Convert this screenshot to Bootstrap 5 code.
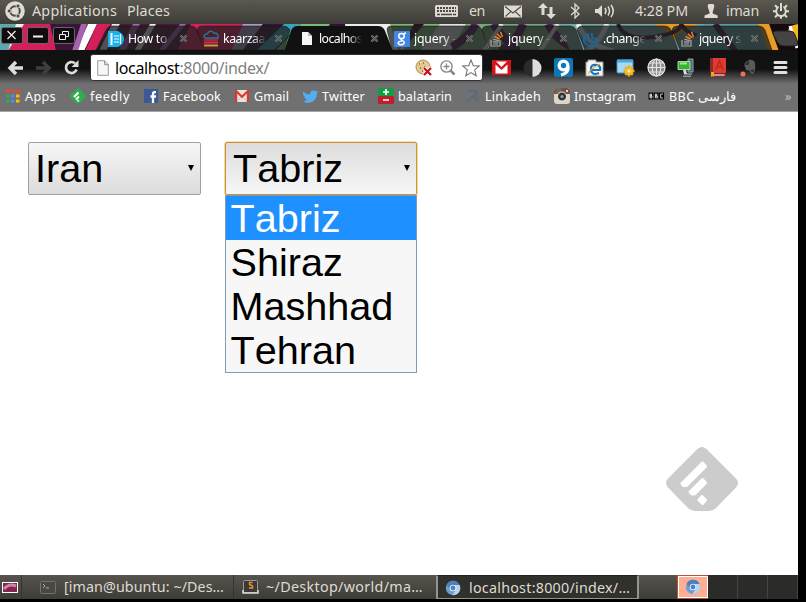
<!DOCTYPE html>
<html lang="en">
<head>
<meta charset="utf-8">
<meta name="viewport" content="width=device-width, initial-scale=1">
<title>localhost:8000/index/</title>
<link href="https://cdn.jsdelivr.net/npm/bootstrap@5.3.0/dist/css/bootstrap.min.css" rel="stylesheet">
<style>
html,body{height:602px;overflow:hidden;background:#000}
body{font-family:"Noto Sans","Open Sans",sans-serif;line-height:1}
svg{display:block;overflow:visible}
.fit{white-space:nowrap;display:inline-block;justify-self:start}
.desktop{width:798px;height:599px}
.sys-panel,.tools,.marks,.tabs-row{display:grid;align-items:center}
.sys-panel{height:24px;padding-left:5px;grid-template-columns:27px 95px 308px 34px 35px 34px 33px 23px 41px 69px 22px 47px 25px;background:linear-gradient(#5b5850,#3d3c38);color:#dfdbd2;font-size:14.3px;padding-bottom:2px}
.strip{height:27px;background:#2b1024;overflow:hidden}
.strip-art{position:absolute;inset:0}
.tabs-row{position:relative;height:27px;padding:2px 0 0 108px;grid-template-columns:95px 98px 93px 96px 93px 98px 115px;color:#fff;font-size:12.3px}
.tab-item{display:grid;grid-template-columns:20px 51px 9px;align-items:center}
.tab-item.tight{grid-template-columns:18px 51px 9px}
.tab-name{width:43px;overflow:hidden;white-space:nowrap;line-height:18px;-webkit-mask-image:linear-gradient(90deg,#000 68%,transparent);mask-image:linear-gradient(90deg,#000 68%,transparent)}
.tools{height:33px;padding-left:8px;grid-template-columns:28px 28px 26px 402px 31px 31px 31px 31px 31px 31px 32px 30px 33px 20px;background:linear-gradient(#111 0,#121212 55%,#707070 100%)}
.omni{width:393px;height:27px;background:#fff;border:1px solid #333;border-radius:3px;display:grid;align-items:center;grid-template-columns:18px 300px 25px 22px 18px;padding-left:6px;font-size:16px;color:#808080}
.omni b{font-weight:400;color:#000}
.marks{height:28px;padding-left:6px;padding-bottom:2px;grid-template-columns:19px 45px 20px 54px 19px 72px 19px 49px 19px 56px 20px 67px 20px 69px 20px 75px 20px 116px 13px;background:#707070;color:#fff;font-size:12.6px;border-bottom:1px solid #a5a5a5}
.marks svg{margin-top:-1px}
.marks span{padding-top:1px}
.marks .more{color:#c4c4c4}
.page-area{height:463px;padding:30px 0 0 28px}
.pick{height:53px;border:1px solid #a0a0a0;border-radius:2px;background:linear-gradient(#f6f6f6,#dcdcdc);font:39.6px/51px "Liberation Sans",Arial,sans-serif;font-kerning:none;color:#000;padding:0 6px}
.pick svg{margin-top:-1px}
.pick-country{width:173px}
.pick-city{width:192px;margin-left:24px;padding-left:7px;border-color:#c7923c;box-shadow:0 0 0 .6px #eebf62;background:linear-gradient(#dcdcdc,#f7f7f7)}
.options{position:absolute;left:0;top:52px;width:192px;border:1px solid #7f9db9;background:#f7f7f7;margin-left:-1px}
.options li{height:44px;line-height:44px;padding-left:4.5px}
.options li:first-child{background:#1e90ff;color:#fff}
.feedly{position:absolute;left:666px;top:335px}
.task-panel{height:24px;background:linear-gradient(#57544d,#3d3c38);color:#dfdbd2;font-size:14.3px}
.task{height:24px;display:grid;align-items:center}
.t0{width:21px;padding-left:2px}
.t1{width:212px;padding-left:18px;grid-template-columns:24px auto;border-left:1px solid #35342f}
.t2{width:203px;padding-left:9px;grid-template-columns:23px auto;border-left:1px solid #35342f}
.t3{width:203px;padding-left:7px;grid-template-columns:24px auto;border:2px solid #92958c;border-top:1px solid #222;border-bottom-width:1px;background:#30302d}
.t3 svg,.t3 span{position:relative;top:1px}
.spaces{margin-left:39px;height:24px}
.spaces div{width:30px;background:#2b2b2a;border-right:1px solid #444}
.spaces .here{background:#ffae91;border:1px solid #fff;outline:1px solid #a85c3d;height:22px;margin-top:1px;padding:2px 6px}
</style>
<script src="https://cdn.jsdelivr.net/npm/bootstrap@5.3.0/dist/js/bootstrap.bundle.min.js"></script>
</head>
<body>
<svg width="0" height="0" class="position-absolute">
<defs>
<symbol id="close" viewBox="0 0 9 9"><path d="M1.5 1.5l6 6M7.5 1.5l-6 6" stroke="#777" stroke-width="2.3"/><path d="M1.5 1.5l6 6M7.5 1.5l-6 6" stroke="#444" stroke-width=".8"/></symbol>
<symbol id="sheet" viewBox="0 0 12 16"><path d="M.7.7h7l3.6 3.8v10.8H.7z" fill="#f7f7f7" stroke="#999"/><path d="M7.5.7v4h4" fill="#ddd" stroke="#999"/></symbol>
<symbol id="overflow" viewBox="0 0 16 16"><path d="M1 9v6h9V9M3 13h5M3 10.800l5.500.3M3.400 8.300l5.400 1.300" fill="none" stroke="#aaa" stroke-width="1.200"/><path d="M4.500 5.500l5 2.500M7 2.800l4 4M10.500.8l2 5.200" stroke="#f48024" stroke-width="1.500"/></symbol>
<symbol id="chromium" viewBox="0 0 16 16"><circle cx="8" cy="8" r="7.2" fill="#6e9fd2"/><path d="M1.6 4.7A7.2 7.2 0 0 1 14.6 5H8L5 9z" fill="#4f7fb8"/><path d="M14.6 5A7.2 7.2 0 0 1 7.5 15.2L11 9.500 10 5z" fill="#b7d3ee"/><circle cx="8" cy="8" r="3.300" fill="#e8f1fb"/><circle cx="8" cy="8" r="2.400" fill="#4b83c5"/></symbol>
</defs>
</svg>
<div class="desktop">
  <header class="sys-panel">
    <svg width="20" height="20" viewBox="0 0 20 20"><circle cx="10" cy="10" r="9.8" fill="#dfdbd2"/><circle cx="10" cy="10" r="4.8" fill="none" stroke="#4b4943" stroke-width="2"/><g fill="#4b4943" stroke="#dfdbd2" stroke-width=".9"><circle cx="4.200" cy="10" r="2"/><circle cx="13" cy="5" r="2"/><circle cx="13" cy="15" r="2"/></g></svg>
    <span class="fit" data-w="85">Applications</span><span class="fit" data-w="43">Places</span>
    <svg width="23" height="13" viewBox="0 0 23 13"><rect width="23" height="12" rx="1.5" fill="#dfdbd2"/><path d="M2 3h19M2 6h19" stroke="#4b4943" stroke-width="2" stroke-dasharray="2 1"/><path d="M2 9.5h3M6 9.5h11M18 9.5h3" stroke="#4b4943" stroke-width="1.6"/></svg>
    <span class="fit" data-w="16">en</span>
    <svg width="18" height="13" viewBox="0 0 18 13"><path d="M0 .5h18v12H0z" fill="#dfdbd2"/><path d="M1 1.5l8 6.5 8-6.5M1.5 11.5L7 6.4M16.5 11.5L11 6.4" fill="none" stroke="#4b4943" stroke-width="1.1"/></svg>
    <svg width="18" height="16" viewBox="0 0 18 16"><path d="M5 0l5 5H6.500v7h-3V5H0zM13 16l-5-5h3.500V4h3v7H18z" fill="#dfdbd2"/></svg>
    <svg width="9" height="16" viewBox="0 0 9 16"><path d="M0 4l8 7-4 4V1l4 4-8 7" fill="none" stroke="#dfdbd2" stroke-width="1.300"/></svg>
    <svg width="21" height="14" viewBox="0 0 21 14"><path d="M1 5h3l4-4v12L4 9H1z" fill="#dfdbd2"/><path d="M11 4q2 3 0 6M14 2.500q3 4.500 0 9M17 1q4.500 6 0 12" fill="none" stroke="#dfdbd2" stroke-width="1.500"/></svg>
    <span class="fit" data-w="53">4:28 PM</span>
    <svg width="14" height="14" viewBox="0 0 14 14"><path d="M4.500 0h5q1 1 .7 3L8.700 8v1.500l5 2V14H.5v-2.500l5-2V8L3.800 3q-.3-2 .7-3z" fill="#dfdbd2"/></svg>
    <span class="fit" data-w="33">iman</span>
    <svg width="16" height="16" viewBox="0 0 16 16"><circle cx="8" cy="8.300" r="4.800" fill="none" stroke="#dfdbd2" stroke-width="2"/><path d="M8 12.300v3.500M2 2.300l3 3M14 2.300l-3 3M2 14.300l3-3M14 14.300l-3-3M0 8.300h3M13 8.300h3" stroke="#dfdbd2" stroke-width="2"/><path d="M8 0v8" stroke="#4b4943" stroke-width="4.600"/><path d="M8 0v8" stroke="#dfdbd2" stroke-width="2"/></svg>
  </header>

  <div class="strip position-relative">
    <svg class="strip-art" width="798" height="27" viewBox="0 0 798 27">
      <path d="M0 0h25L8 26H0z" fill="#5da8ac"/><path d="M16 0h8l10 27H8z" fill="#eee"/><path d="M24 0h56L70 27H8z" fill="#d51f5a"/><path d="M50 0h29l-4 27H56z" fill="#3a1538"/><path d="M70 0h18L76 27h-6z" fill="#3a1538"/><path d="M88 0h9L84 27h-8z" fill="#fff"/><path d="M81 0h6l-9 27h-6z" fill="#a663ae"/><path d="M97 0h14L96 27H85z" fill="#d51f5a"/><path d="M112 0h8l-14 27h-7z" fill="#efe5ee"/><path d="M120 0h75l-10 27h-75z" fill="#4b183b"/><path d="M133 0h7l-15 27h-7zM180 0h6l-22 27h-6z" fill="#a663ae"/><path d="M150 0h6l-16 27h-6zM208 0h7l-26 27h-9z" fill="#eee"/><path d="M191 0h64l-14 27h-64z" fill="#d51f5a"/><path d="M243 0h20l-14 27h-18z" fill="#a99ac7"/><path d="M263 0h21l-20 27h-22z" fill="#351237"/><path d="M284 0h17l-28 27h-17z" fill="#36a6b7"/><path d="M301 0h39l-20 27h-45z" fill="#75bd74"/><path d="M330 0h22v27h-40z" fill="#341039"/><path d="M345 0h54l10 27h-61z" fill="#e9f0eb"/><path d="M360 0h18M390 0h24l-15 27M424 0h25l-20 27h-27z" fill="#7bb779"/><path d="M440 0h26l-10 27h-36z" fill="#dce6df"/><path d="M466 0h95l15 27H450z" fill="#75a57f"/><path d="M476 0q-8 14-24 23M493 0q10 14 25 27M523 0q-6 17-23 27M548 0q8 17 28 25" fill="none" stroke="#4c1c58" stroke-width="8"/><path d="M502 0l-18 27M558 0l-18 27" stroke="#e7edec" stroke-width="4"/><path d="M560 0h145v27H570z" fill="#72a9a5"/><path d="M578 0q9 22 36 27M607 0q-6 17-20 27" fill="none" stroke="#e8eff0" stroke-width="5"/><path d="M655 0h43q-15 5-25 16-8-11-18-16z" fill="#e49b24"/><path d="M618 0q6 17 35 13t28-13q8 13 27 13" fill="none" stroke="#2f1636" stroke-width="4"/><path d="M704 0h55l13 27h-86z" fill="#5e9c9c"/><path d="M715 0l20 27" stroke="#381647" stroke-width="6"/><path d="M758 0h11l10 27h-11z" fill="#e89b22"/><path d="M770 0h28v27h-19z" fill="#16090f"/><path d="M798 0q-10 1-10 8 0 6 10 9z" fill="#f3b61c"/><path d="M790 2l7 22" stroke="#fff" stroke-width="3"/>
      <g fill="#20201f" fill-opacity=".76" stroke="#111" stroke-opacity=".5"><path d="M96 26l10-20q2-4 6-4h79q4 0 6 4l7 20z"/><path d="M205 26l-8-20q1-4 5-4h81q5 0 7 4l-6 20z"/><path d="M392 26l-5-20q0-4 4-4h85q4 0 6 4l7 20z"/><path d="M490 26l-8-20q1-4 5-4h83q4 0 6 4l7 20z"/><path d="M585 26l-8-20q1-4 5-4h83q4 0 6 4l7 20z"/><path d="M680 26l-8-20q1-4 5-4h82q4 0 6 4l7 20z"/></g>
      <path d="M284 27l7-20q2-5 6-5h81q5 0 7 5l8 20z" fill="#111"/><path d="M0 26.500h798" stroke="#111"/>
      <path d="M773 10q0-3 3-3h14q4 0 5 4l3 8q0 3-3 3h-11q-4 0-6-3z" fill="#444" stroke="#222"/>
      <g fill="#100c10" stroke="#666"><rect x="1.500" y="3.500" width="21" height="16" rx="2"/><rect x="27.500" y="3.500" width="21" height="16" rx="2"/><rect x="53.500" y="3.500" width="21" height="16" rx="2"/></g>
      <path d="M7.500 7l8 8M15.500 7l-8 8" stroke="#eee" stroke-width="1.300"/><path d="M33 12.500h10" stroke="#eee" stroke-width="2"/><path d="M59.500 10.500h6v5h-6zM62.500 10.500v-3h6v5h-3" fill="none" stroke="#eee"/>
    </svg>
    <div class="tabs-row">
      <div class="tab-item"><svg width="16" height="16"><path d="M0 0h10q6 3 6 8t-6 8H0z" fill="#16b3ed"/><path d="M3.500 2v12" stroke="#fff" stroke-width="2"/><path d="M6 5h5M6 8h5M6 11h5M12.500 3v10" stroke="#fff" stroke-width="1.200"/></svg><span class="tab-name"><span class="fit" data-w="39">How to</span></span><svg width="9" height="9"><use href="#close"/></svg></div>
      <div class="tab-item"><svg width="16" height="16"><path d="M2 7Q-1 4 4 3q3-5 7-1 5 0 4 5H2" fill="none" stroke="#277a9c" stroke-width="1.300"/><path d="M1 9h14" stroke="#a52644" stroke-width="2"/><path d="M1 11.500h14" stroke="#d52c4f" stroke-width="2"/><path d="M1 14.500h14" stroke="#c99a2f" stroke-width="2"/></svg><span class="tab-name"><span class="fit" data-w="42">kaarzaa</span></span><svg width="9" height="9"><use href="#close"/></svg></div>
      <div class="tab-item tight"><svg width="12" height="15"><path d="M1 1h6l4 4v9H1z" fill="#f5f5f5"/><path d="M7 1v4h4" fill="#bbb"/></svg><span class="tab-name"><span class="fit" data-w="43">localhos</span></span><svg width="9" height="9"><use href="#close"/></svg></div>
      <div class="tab-item"><svg width="16" height="16"><rect width="16" height="16" rx="1" fill="#4285e8"/><g fill="none" stroke="#fff" stroke-width="1.500"><ellipse cx="7.500" cy="5" rx="2.800" ry="2.600"/><path d="M10 2.500l2-.5M8.500 7.500q-3 1 0 2.200 3 1.500 1 3.300-2.500 1.500-5 0-1.500-2.500 3.500-3"/></g></svg><span class="tab-name"><span class="fit" data-w="42">jquery -</span></span><svg width="9" height="9"><use href="#close"/></svg></div>
      <div class="tab-item tight"><svg width="16" height="16"><use href="#overflow"/></svg><span class="tab-name"><span class="fit" data-w="42">jquery -</span></span><svg width="9" height="9"><use href="#close"/></svg></div>
      <div class="tab-item"><svg width="16" height="16"><g fill="none" stroke="#1468a8" stroke-width="1.700"><path d="M2 3q-4 9 5 12 5 1 8-2M5.500 2.500Q3 9 9 11q4 1 6-1M9 2Q8 6 11 7.500q2 1 4 0"/></g></svg><span class="tab-name"><span class="fit" data-w="43">.change</span></span><svg width="9" height="9"><use href="#close"/></svg></div>
      <div class="tab-item tight"><svg width="16" height="16"><use href="#overflow"/></svg><span class="tab-name"><span class="fit" data-w="42">jquery s</span></span><svg width="9" height="9"><use href="#close"/></svg></div>
    </div>
  </div>

  <nav class="tools">
    <svg width="15" height="14"><path d="M8 1L2 7l6 6M2 7h13" fill="none" stroke="#ddd" stroke-width="3.400"/></svg>
    <svg width="15" height="14"><path d="M7 1l6 6-6 6M13 7H0" fill="none" stroke="#3e3e3e" stroke-width="3.400"/></svg>
    <svg width="15" height="15"><path d="M12.600 9.500A5.500 5.500 0 1 1 11 3.300" fill="none" stroke="#ddd" stroke-width="2.700"/><path d="M14.500 0v7H7.500z" fill="#ddd"/></svg>
    <div class="omni">
      <svg width="12" height="16"><use href="#sheet"/></svg>
      <span class="fit" data-w="154"><b>localhost</b>:8000/index/</span>
      <svg width="18" height="18"><circle cx="8" cy="8" r="7" fill="#e3c994" stroke="#b08f55"/><path d="M4 5h1M8 4h1M5 9h1M9 8h1M7 12h1" stroke="#8a6030" stroke-width="1.500"/><path d="M9 9l7 7M16 9l-7 7" stroke="#fff" stroke-width="4"/><path d="M9 9l7 7M16 9l-7 7" stroke="#c8101a" stroke-width="2.200"/></svg>
      <svg width="16" height="16"><circle cx="6.500" cy="6.500" r="5.600" fill="none" stroke="#888" stroke-width="1.400"/><path d="M3.500 6.500h6M6.500 3.500v6" stroke="#888" stroke-width="1.300"/><path d="M10.500 10.500l4 4" stroke="#888" stroke-width="2.500"/></svg>
      <svg width="18" height="18"><path d="M9 1l2.300 5.600 6 .4-4.600 3.900 1.500 5.900L9 13.600l-5.200 3.200 1.500-5.900L.7 7l6-.4z" fill="#fff" stroke="#777" stroke-width="1.100"/></svg>
    </div>
    <svg width="19" height="15" viewBox="0 0 19 15"><rect width="19" height="15" fill="#d4141b"/><path d="M4 1.500h11L9.500 7zM3.500 13.500v-9l6 5.500 6-5.500v9z" fill="#fff"/></svg>
    <svg width="20" height="20"><circle cx="9.500" cy="10" r="9" fill="#2b2b2b"/><path d="M9.500 1a9 9 0 0 1 0 18z" fill="#ddd"/></svg>
    <svg width="19" height="19"><rect width="19" height="19" rx="2" fill="#0a78b7"/><circle cx="9.500" cy="7.500" r="4.300" fill="none" stroke="#fff" stroke-width="3.300"/><path d="M14 8q1 7-7 9" fill="none" stroke="#fff" stroke-width="3.200"/></svg>
    <svg width="19" height="18"><path d="M1 3h2V1h8v2h7v14H1z" fill="#f4f4f4" stroke="#999"/><path d="M14 14q-7 3-8-3t6-5q4 1 3 5H6" fill="none" stroke="#1573c0" stroke-width="2.200"/><path d="M4 15Q3 11 15 5" fill="none" stroke="#e5ae22" stroke-width="1.200"/></svg>
    <svg width="20" height="18"><rect x="1" y="1" width="16" height="13" rx="1" fill="#a9d7f4" stroke="#3c91c8"/><path d="M1 2h16" stroke="#47a8de" stroke-width="3"/><path d="M13 6.500v11M7.500 12h11M9.200 8.200l7.600 7.600M16.800 8.200l-7.600 7.600" stroke="#e9a615" stroke-width="2.600"/><circle cx="13" cy="12" r="4" fill="#f4bb27"/><circle cx="13" cy="12" r="1.500" fill="#fff4c8"/></svg>
    <svg width="19" height="19"><circle cx="9.500" cy="9.500" r="9" fill="#8c8c8c"/><g fill="none" stroke="#e4e4e4" stroke-width="1.100"><circle cx="9.500" cy="9.500" r="8.500"/><ellipse cx="9.500" cy="9.500" rx="4.300" ry="8.500"/><path d="M9.500 1v17M1 9.500h17M2.500 5h14M2.500 14h14"/></g></svg>
    <svg width="18" height="19"><path d="M10 1h5v13h-5z" fill="#526a70" stroke="#8fa3a8"/><path d="M6 16h8M5 18.300h8" stroke="#8796a0" stroke-width="1.500"/><path d="M0 3.500h12v8H0z" fill="#35b52c" stroke="#d8e8d8" stroke-width=".8"/><path d="M2 5.500h7" stroke="#9fec8c" stroke-width="2"/><path d="M5 12h3l1 4H6z" fill="#ddd"/></svg>
    <svg width="17" height="19"><path d="M0 0h16v15H0z" fill="#e13a32"/><path d="M0 0h3v15H0z" fill="#8d2b28"/><path d="M1 16h14v2H1z" fill="#eee" stroke="#b72a28"/><path d="M5.500 12l4-9 4 9M7 9h5" fill="none" stroke="#b52824" stroke-width="1.400"/><path d="M1 14h3v5l-1.500-1L1 19z" fill="#e2ac24"/></svg>
    <svg width="18" height="19"><path d="M4 6l4-4q6-1 7 3 1 8-2 11-3 0-3-3l-4-1z" fill="#5a5a5a"/><path d="M4.500 6H8V2M11 13q3-2 2 1" fill="none" stroke="#242424" stroke-width="1.300"/><circle cx="3" cy="16" r="2.500" fill="#f0705c"/></svg>
    <svg width="14" height="15"><path d="M2 2.500h11M2 7.500h11M2 12.500h11" stroke="#e0e0e0" stroke-width="3" stroke-linecap="round"/></svg>
  </nav>

  <nav class="marks">
    <svg width="14" height="14"><g stroke-width="3.200"><path d="M0 2h13.500" stroke="#ee4434" stroke-dasharray="3.500 1.500"/><path d="M0 7h3.500M0 12h3.500" stroke="#35a853"/><path d="M5 7h3.500M5 12h3.500" stroke="#4c8cf5"/><path d="M10 7h3.500M10 12h3.500" stroke="#fbbc05"/></g></svg><span class="fit" data-w="31">Apps</span>
    <svg width="16" height="16"><path d="M8 0l8 8-6 7H6L0 8z" fill="#2bb24c"/><path d="M4 9l4.500-4.500M6 11.500L9 8.500M7.700 13.200l1-1" stroke="#fff" stroke-width="2"/></svg><span class="fit" data-w="40">feedly</span>
    <svg width="14" height="14"><path d="M0 0h14v14H0z" fill="#3b5998"/><path d="M12 3.200h-1.500q-1.500 0-1.500 1.800V14M6.500 7.500H12" fill="none" stroke="#fff" stroke-width="2.300"/></svg><span class="fit" data-w="58">Facebook</span>
    <svg width="14" height="12" viewBox="0 0 14 12"><path d="M0 0h14v12H0z" fill="#e9e4e0"/><path d="M2.200 11.500l4-4.500M11.800 11.500l-4-4.500" stroke="#c9c2bd"/><path d="M1.100 12V1L7 6.700 12.900 1v11" fill="none" stroke="#d9382f" stroke-width="2.200"/></svg><span class="fit" data-w="35">Gmail</span>
    <svg width="15" height="13"><path d="M0 1.500q3 3 7 3Q7 0 11 .5q1 0 2 1L15 1l-1 2q0 9-9 10-3 0-5-2 3 0 4-1-2-1-3-3h1Q-.5 5 0 1.500z" fill="#55acee"/></svg><span class="fit" data-w="43">Twitter</span>
    <svg width="16" height="16"><rect width="16" height="8" rx="1" fill="#169b45"/><rect y="8" width="16" height="8" rx="1" fill="#bd202b"/><path d="M5 4h6M8 1v6M5 12h6" stroke="#fff" stroke-width="1.700"/></svg><span class="fit" data-w="54">balatarin</span>
    <svg width="16" height="16"><path d="M1 1h14v14H1z" fill="none" stroke="#66717f"/><path d="M4 3h8L8 8l4 5M8 8l-5 5M10 3l3 9" fill="none" stroke="#56697f" stroke-width="1.300"/></svg><span class="fit" data-w="56">Linkadeh</span>
    <svg width="16" height="16"><rect width="16" height="16" rx="3" fill="#ded5c7"/><path d="M0 6V3q0-3 3-3h10q3 0 3 3v3z" fill="#71513f"/><path d="M2 0v6" stroke="#cc4a3a"/><path d="M4 0v6" stroke="#4ba05a"/><path d="M6 0v6" stroke="#4a8fc0"/><circle cx="8" cy="8.500" r="4.500" fill="#333" stroke="#eee"/><circle cx="8" cy="8.500" r="1.600" fill="#8aa2b6"/><path d="M12 2h2v2h-2z" fill="#ddd"/></svg><span class="fit" data-w="62">Instagram</span>
    <svg width="15" height="6" viewBox="0 0 15 6"><path d="M-.5-.5h4.800v7H-.5zM4.800-.5h4.800v7H4.800zM10.100-.5h5v7h-5z" fill="#000"/><g fill="none" stroke="#fff" stroke-width=".8"><path d="M1 1h1.500v2H1zM1 3h2v2H1zM6.300 1h1.500v2H6.300zM6.300 3h2v2h-2zM14 1h-2.300v4H14"/></g></svg><span class="fit" data-w="69">BBC <bdi>فارسی</bdi></span>
    <span class="more">»</span>
  </nav>

  <main class="page-area position-relative bg-white">
    <div class="d-flex">
      <div class="pick pick-country d-flex justify-content-between align-items-center"><span>Iran</span><svg width="6" height="6"><path d="M0 0h6L3 6z"/></svg></div>
      <div class="pick pick-city d-flex justify-content-between align-items-center position-relative"><span>Tabriz</span><svg width="6" height="6"><path d="M0 0h6L3 6z"/></svg>
        <ul class="options list-unstyled mb-0"><li>Tabriz</li><li>Shiraz</li><li>Mashhad</li><li>Tehran</li></ul>
      </div>
    </div>
    <svg class="feedly" width="72" height="64" viewBox="0 0 72 64"><path d="M31.500 2q4.500-4 9 0L70 31.500q4 4.500 0 9L50 61q-3 3-7 3H29q-4 0-7-3L2 40.500q-4-4.500 0-9z" fill="#ccc"/><g fill="#fff" stroke="#fff" stroke-width="3" stroke-linejoin="round"><path d="M16 36.500L36.500 16l3 3.500-19 19h-3zM24 45l12.500-12.500 3 3.500-11 11h-2.500zM33 53l3-3.500 3.500 3.500-3 3.500z"/></g></svg>
  </main>

  <footer class="task-panel d-flex">
    <div class="task t0"><svg width="16" height="11"><rect x=".5" y=".5" width="15" height="10" fill="#842450" stroke="#fff"/><path d="M2 7q5-6 12-3" fill="none" stroke="#c987a5" stroke-width="3"/></svg></div>
    <div class="task t1"><svg width="16" height="13"><rect x=".5" y=".5" width="15" height="12" rx="1" fill="#484943" stroke="#74736b"/><path d="M3 3l2 2-2 2M6 7h3" fill="none" stroke="#aaa"/></svg><span class="fit" data-w="160">[iman@ubuntu: ~/Des…</span></div>
    <div class="task t2"><svg width="15" height="14"><rect x=".5" y=".5" width="14" height="12" rx="1" fill="#393938" stroke="#999"/><path d="M0 10v3h15v-3" fill="none" stroke="#ddd" stroke-width="1.500"/><path d="M9.500 2.500h-3v2l3 1.500v2h-3.500" fill="none" stroke="#ee9025" stroke-width="1.400"/></svg><span class="fit" data-w="157">~/Desktop/world/ma…</span></div>
    <div class="task t3"><svg width="16" height="16"><use href="#chromium"/></svg><span class="fit" data-w="161">localhost:8000/index/…</span></div>
    <div class="spaces d-flex"><div class="here"><svg width="16" height="16"><use href="#chromium"/></svg></div><div></div><div></div><div></div></div>
  </footer>
</div>
<script>
// Spread each label's letters so that it fills its reserved width.
document.querySelectorAll('.fit').forEach(function (el) {
  var spare = el.dataset.w - el.getBoundingClientRect().width;
  el.style.letterSpacing = spare / el.textContent.length + 'px';
});
</script>
</body>
</html>
